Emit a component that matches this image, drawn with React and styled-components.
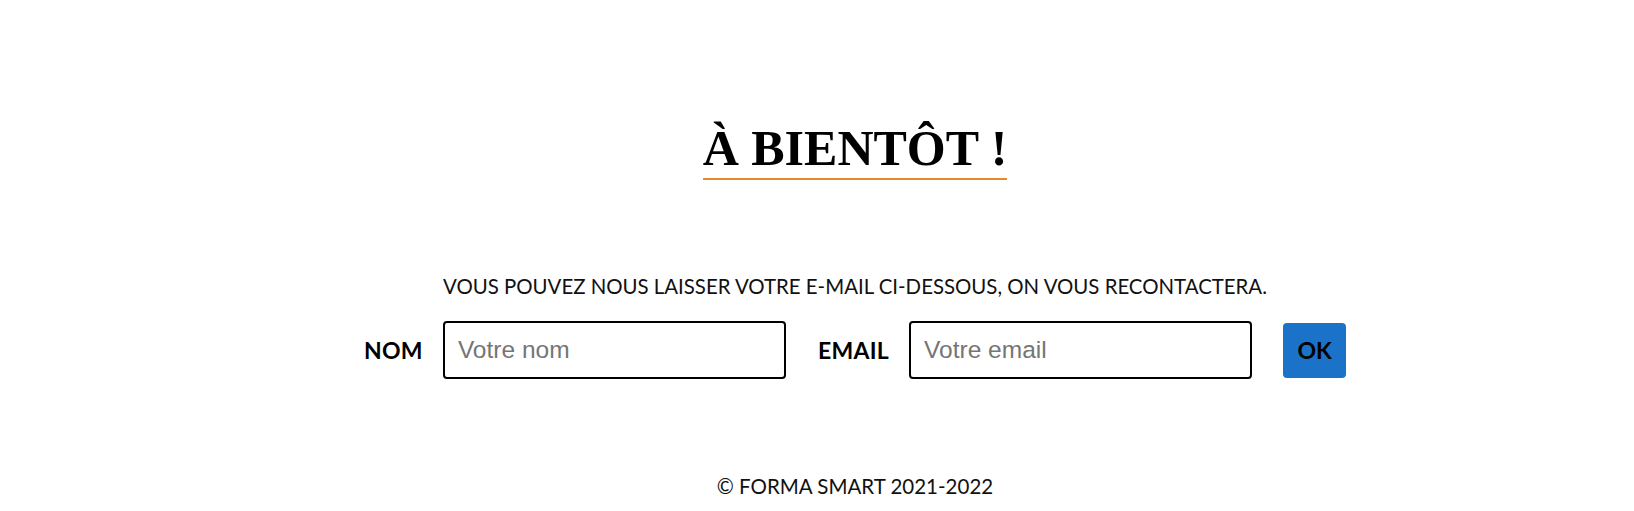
import React from "react";
import styled, { createGlobalStyle } from "styled-components";

const Global = createGlobalStyle`
  html, body { margin: 0; padding: 0; background: #ffffff; }
  body { font-family: Lato, "Noto Sans", sans-serif; color: #111; }
`;

const Page = styled.main`
  padding-left: 76px;
  display: flex;
  flex-direction: column;
  align-items: center;
  text-align: center;
`;

const Title = styled.h1`
  margin: 123px 0 0;
  padding: 0 0 5px;
  font-family: "Liberation Serif", "Times New Roman", serif;
  font-weight: 700;
  font-size: 50px;
  line-height: 1;
  color: #000;
  border-bottom: 2px solid #e38b2c;
`;

const Lead = styled.p`
  margin: 96px 0 0;
  font-size: 20.4px;
  line-height: 21px;
  text-transform: uppercase;
  color: #111;
`;

const Form = styled.form`
  margin-top: 24px;
  display: flex;
  align-items: center;
`;

const Field = styled.label`
  display: flex;
  align-items: center;
  gap: 20px;
  margin-right: ${(p) => p.$after}px;
  font-size: 23px;
  font-weight: 700;
  letter-spacing: 0.3px;
  color: #000;
`;

const Input = styled.input`
  box-sizing: border-box;
  width: 343px;
  height: 58px;
  border: 2px solid #000;
  border-radius: 4px;
  padding: 0 13px;
  font-family: "Liberation Sans", Arial, sans-serif;
  font-size: 24.5px;
  color: #000;
  outline: none;
  &::placeholder { color: #757575; }
`;

const Button = styled.button`
  width: 63px;
  height: 55px;
  border: none;
  border-radius: 4px;
  background: #1a73c9;
  color: #000;
  font-family: Lato, "Noto Sans", sans-serif;
  font-weight: 700;
  font-size: 23px;
  cursor: pointer;
`;

const Footer = styled.footer`
  margin-top: 97px;
  font-size: 20.5px;
  line-height: 21px;
  color: #111;
`;

export default function App() {
  return (
    <>
      <Global />
      <Page>
        <Title>À BIENTÔT !</Title>
        <Lead>Vous pouvez nous laisser votre e-mail ci-dessous, on vous recontactera.</Lead>
        <Form onSubmit={(e) => e.preventDefault()}>
          <Field $after={32}>
            NOM
            <Input type="text" placeholder="Votre nom" />
          </Field>
          <Field $after={31}>
            EMAIL
            <Input type="email" placeholder="Votre email" />
          </Field>
          <Button type="submit">OK</Button>
        </Form>
        <Footer>© FORMA SMART 2021-2022</Footer>
      </Page>
    </>
  );
}
